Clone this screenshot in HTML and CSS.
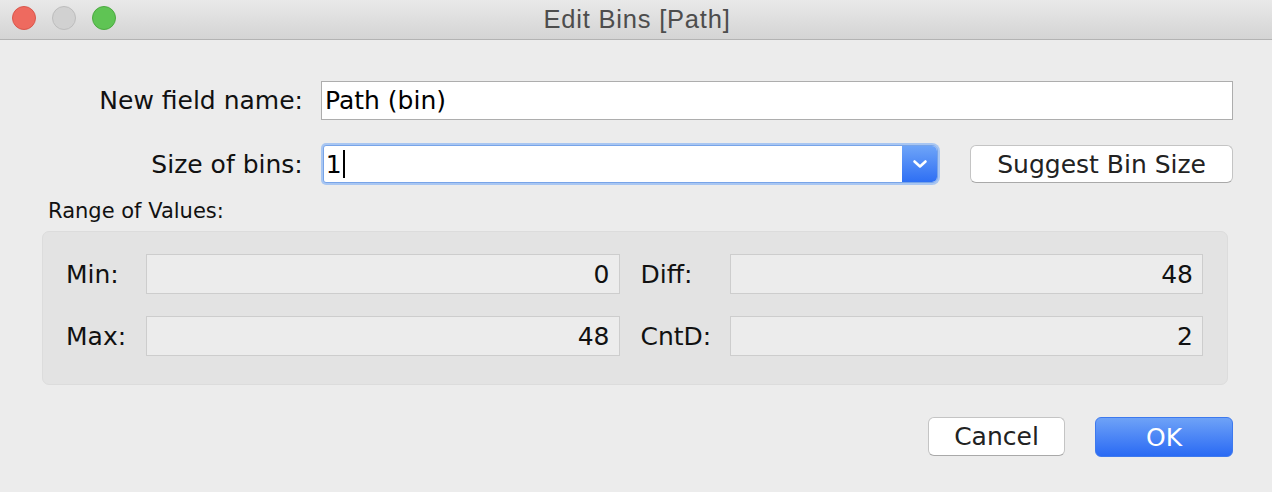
FILE: index.html
```html
<!DOCTYPE html>
<html lang="en">
<head>
    <meta charset="UTF-8">
    <meta name="viewport" content="width=device-width, initial-scale=1.0">
    <title>Edit Bins [Path]</title>
    <link rel="stylesheet" href="styles.css">
</head>
<body>
    <div class="window">
        <div class="titlebar">
            <div class="lights">
                <span class="light close"></span>
                <span class="light minimize"></span>
                <span class="light zoom"></span>
            </div>
            <div class="title">Edit Bins [Path]</div>
        </div>

        <div class="content">
            <div class="row">
                <label class="field-label" for="fieldName">New field name:</label>
                <input class="text-input" type="text" id="fieldName" value="Path (bin)">
            </div>

            <div class="row row-bins">
                <label class="field-label" for="binSize">Size of bins:</label>
                <div class="combo">
                    <div class="combo-text" id="binSize">1<span class="caret"></span></div>
                    <span class="combo-arrow">
                        <svg width="16" height="10" viewBox="0 0 16 10">
                            <path d="M2.5 2.5 L8 7.5 L13.5 2.5" fill="none" stroke="#fff" stroke-width="2.6" stroke-linecap="round" stroke-linejoin="round"/>
                        </svg>
                    </span>
                </div>
                <button class="btn btn-suggest">Suggest Bin Size</button>
            </div>

            <div class="range-title">Range of Values:</div>
            <div class="range-panel">
                <span class="range-label">Min:</span>
                <div class="range-value">0</div>
                <span class="range-label range-label-right">Diff:</span>
                <div class="range-value">48</div>

                <span class="range-label">Max:</span>
                <div class="range-value">48</div>
                <span class="range-label range-label-right">CntD:</span>
                <div class="range-value">2</div>
            </div>

            <div class="actions">
                <button class="btn btn-cancel">Cancel</button>
                <button class="btn btn-ok">OK</button>
            </div>
        </div>
    </div>
</body>
</html>
```

FILE: styles.css
```css
/* Dialog window */
body {
    margin: 0;
    background: #ececec;
    font-family: "DejaVu Sans", "Noto Sans", sans-serif;
    color: #111;
}

.window {
    width: 1272px;
    height: 492px;
    background: #ececec;
    overflow: hidden;
}

.titlebar {
    position: relative;
    height: 39px;
    background: linear-gradient(#e9e9e9, #d4d4d4);
    border-bottom: 1px solid #b3b3b3;
    display: flex;
    align-items: center;
    justify-content: center;
}

.lights {
    position: absolute;
    left: 12px;
    top: 6px;
    display: flex;
    gap: 16px;
}

.light {
    width: 22px;
    height: 22px;
    border-radius: 50%;
    border: 1px solid transparent;
}

.close {
    background: #ee6a5f;
    border-color: #d9574c;
}

.minimize {
    background: #d1d1d1;
    border-color: #bdbdbd;
}

.zoom {
    background: #5fc454;
    border-color: #4caa41;
}

.title {
    margin-left: 2px;
    font-family: "Liberation Sans", Arial, sans-serif;
    font-size: 25.5px;
    letter-spacing: 0.8px;
    color: #4d4d4d;
}

.content {
    padding: 41px 39px 0 42px;
}

/* Form rows */
.row {
    display: flex;
    align-items: center;
    height: 39px;
}

.row-bins {
    margin-top: 25px;
    height: 38px;
}

.field-label {
    width: 261px;
    margin-right: 18px;
    text-align: right;
    font-size: 25px;
    color: #111;
}

.text-input {
    flex: 1;
    height: 39px;
    box-sizing: border-box;
    border: 1px solid #adadad;
    background: #fff;
    padding: 0 3px;
    font-family: inherit;
    font-size: 25px;
    color: #000;
    outline: none;
}

.combo {
    display: flex;
    width: 614px;
    height: 36px;
    margin-left: 2px;
    margin-right: 32px;
    border: 1px solid #78a4e8;
    border-radius: 3px 6px 6px 3px;
    box-shadow: 0 0 0 2px #a8c6f2;
    background: #fff;
}

.combo-text {
    flex: 1;
    display: flex;
    align-items: center;
    padding-left: 2px;
    font-size: 25px;
    color: #000;
}

.caret {
    display: inline-block;
    width: 2px;
    height: 28px;
    margin-left: 1px;
    background: #000;
}

.combo-arrow {
    width: 35px;
    display: flex;
    align-items: center;
    justify-content: center;
    background: linear-gradient(#6ea4f8, #2e6ff4);
    border-radius: 0 5px 5px 0;
}

/* Buttons */
.btn {
    height: 39px;
    box-sizing: border-box;
    border-radius: 6px;
    font-family: inherit;
    font-size: 25px;
    cursor: pointer;
    padding: 0;
}

.btn-suggest {
    width: 263px;
    height: 38px;
    background: #fff;
    border: 1px solid #c4c4c4;
    border-bottom-color: #a9a9a9;
    color: #222;
}

.btn-cancel {
    width: 137px;
    background: #fff;
    border: 1px solid #c4c4c4;
    border-bottom-color: #a9a9a9;
    color: #222;
}

.btn-ok {
    width: 138px;
    height: 40px;
    background: linear-gradient(#6ea2f7, #2a6af4);
    border: 1px solid #3d79ee;
    color: #fff;
}

/* Range of values panel */
.range-title {
    margin: 16px 0 0 6px;
    font-size: 21px;
    line-height: 24px;
    color: #111;
}

.range-panel {
    width: 1186px;
    box-sizing: border-box;
    margin-top: 8px;
    padding: 22px 24px 28px 23px;
    background: #e3e3e3;
    border: 1px solid #dcdcdc;
    border-radius: 7px;
    display: grid;
    grid-template-columns: 80px 1fr 110px 1fr;
    row-gap: 22px;
    align-items: center;
}

.range-label {
    font-size: 25px;
    color: #111;
}

.range-label-right {
    padding-left: 21px;
}

.range-value {
    height: 40px;
    box-sizing: border-box;
    border: 1px solid #cdcdcd;
    background: #ececec;
    padding-right: 9px;
    display: flex;
    align-items: center;
    justify-content: flex-end;
    font-size: 25px;
    color: #111;
}

.actions {
    display: flex;
    justify-content: flex-end;
    gap: 30px;
    margin-top: 32px;
}
```
